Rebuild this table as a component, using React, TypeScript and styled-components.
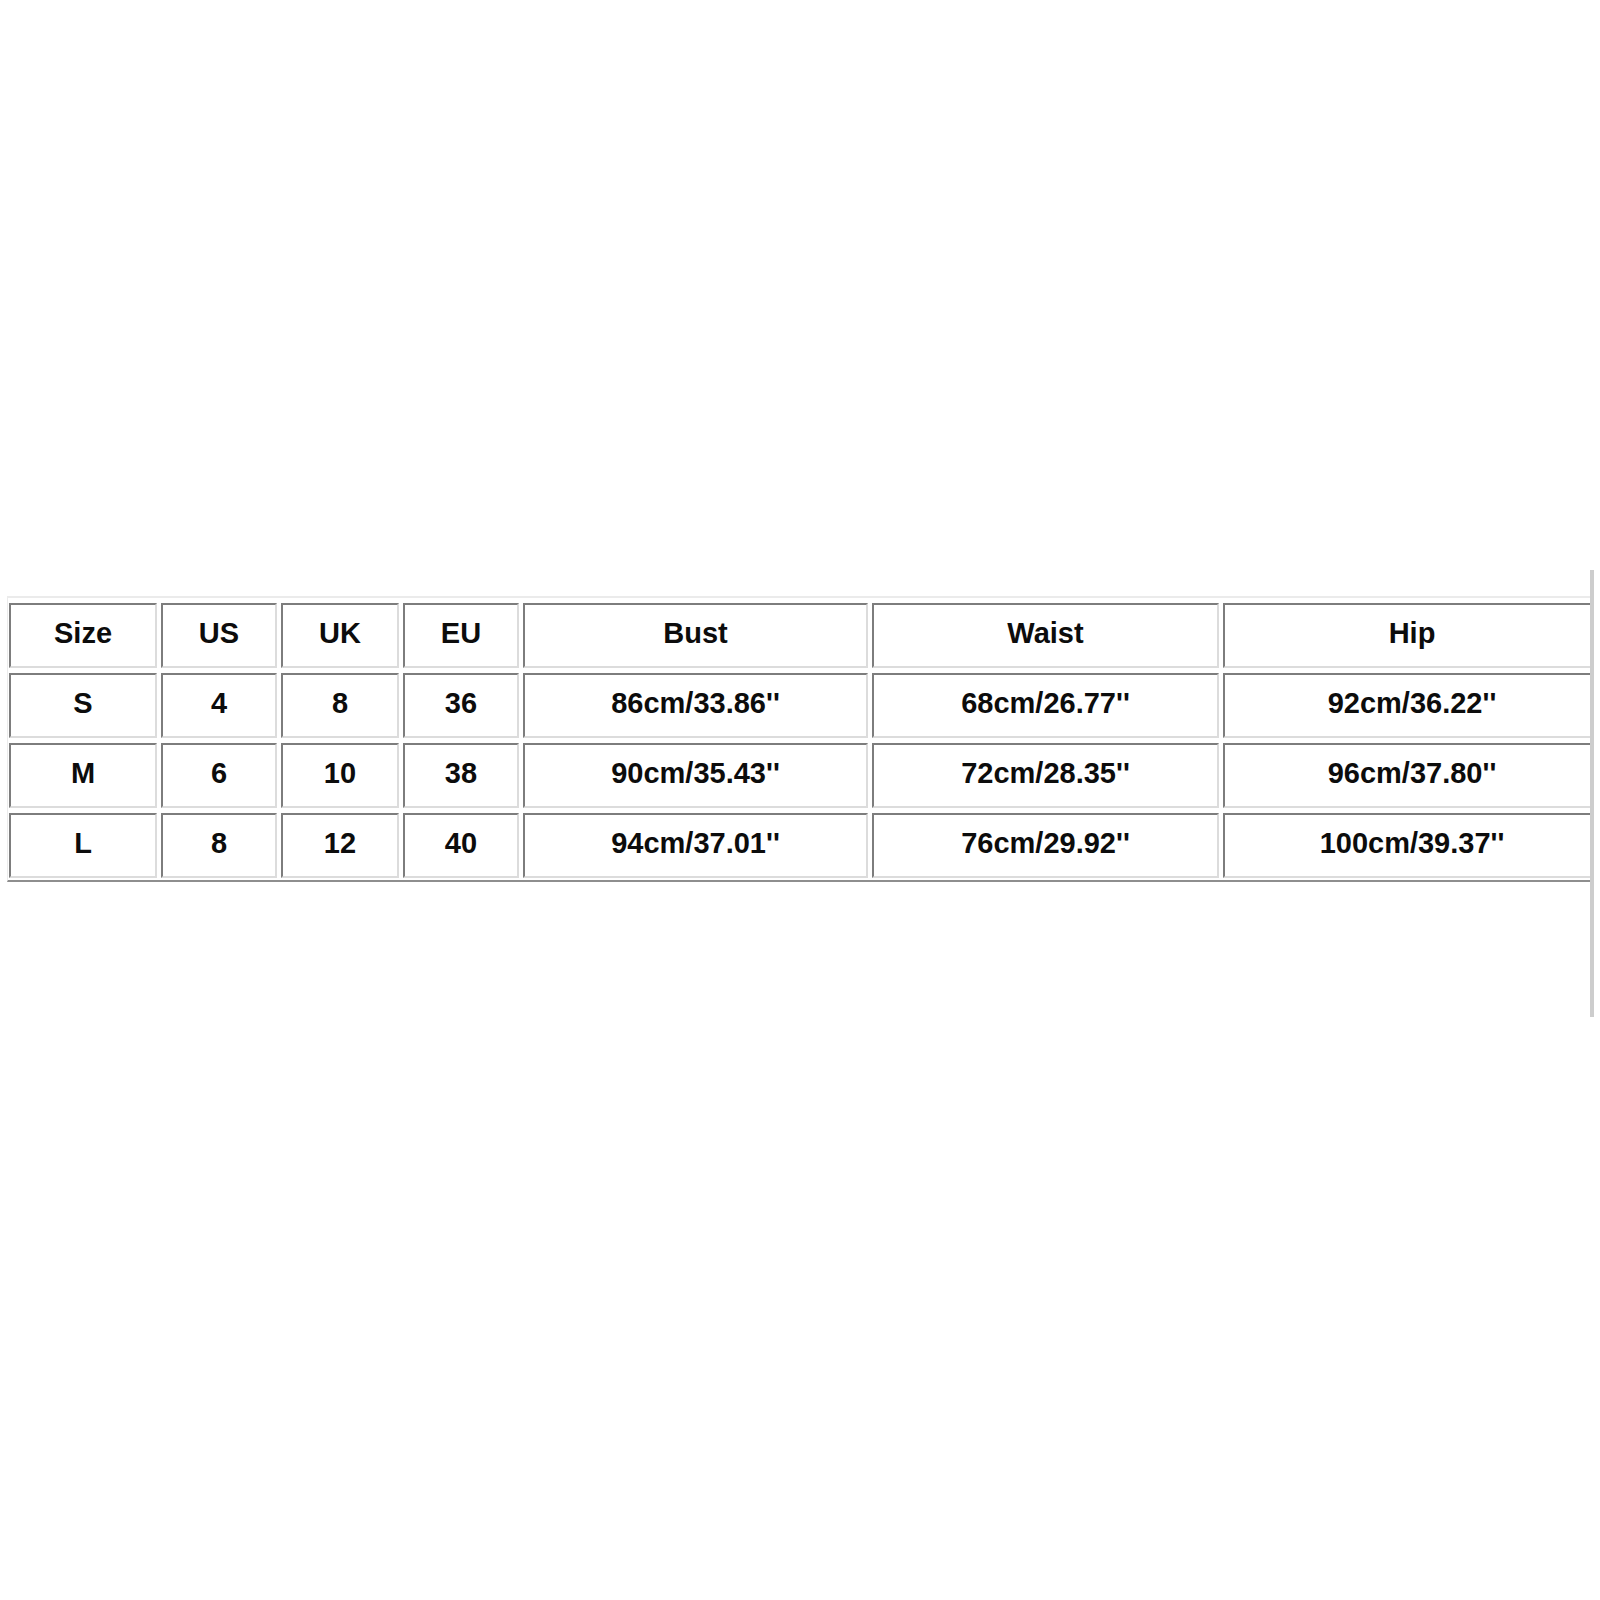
import React from "react";
import styled, { createGlobalStyle } from "styled-components";

const Global = createGlobalStyle`
  html, body { margin: 0; padding: 0; background: #ffffff; }
  body { font-family: "Liberation Sans", Arial, sans-serif; width: 1600px; height: 1600px; overflow: hidden; }
`;

const Frame = styled.div`
  margin-top: 570px;
  width: 1590px;
  height: 421px;
  border-right: 4px solid #cdcdcd;
  overflow: hidden;
  padding-top: 26px;
  box-sizing: content-box;
`;

const Table = styled.div`
  margin-left: 7px;
  width: 1620px;
  display: grid;
  grid-template-columns: 148px 116px 118px 116px 345px 347px 378px;
  column-gap: 4px;
  row-gap: 5px;
  grid-auto-rows: 65px;
  border-top: 2px solid #ebebeb;
  border-left: 1px solid #ebebeb;
  border-bottom: 2px solid #8e8e8e;
  padding: 5px 0 2px 1px;
`;

const Cell = styled.div`
  box-sizing: border-box;
  display: flex;
  align-items: center;
  justify-content: center;
  border-top: 2px solid #7d7d7d;
  border-left: 2px solid #7d7d7d;
  border-bottom: 2px solid #dcdcdc;
  border-right: 2px solid #dcdcdc;
  font-family: "Liberation Sans", Arial, sans-serif;
  font-weight: 700;
  font-size: 29px;
  color: #0c0c0c;
  white-space: nowrap;
  padding-bottom: 4px;
`;

const rows: string[][] = [
  ["Size", "US", "UK", "EU", "Bust", "Waist", "Hip"],
  ["S", "4", "8", "36", "86cm/33.86''", "68cm/26.77''", "92cm/36.22''"],
  ["M", "6", "10", "38", "90cm/35.43''", "72cm/28.35''", "96cm/37.80''"],
  ["L", "8", "12", "40", "94cm/37.01''", "76cm/29.92''", "100cm/39.37''"],
];

export default function App() {
  return (
    <>
      <Global />
      <Frame>
        <Table>
          {rows.map((r, i) =>
            r.map((c, j) => <Cell key={`${i}-${j}`}>{c}</Cell>)
          )}
        </Table>
      </Frame>
    </>
  );
}
